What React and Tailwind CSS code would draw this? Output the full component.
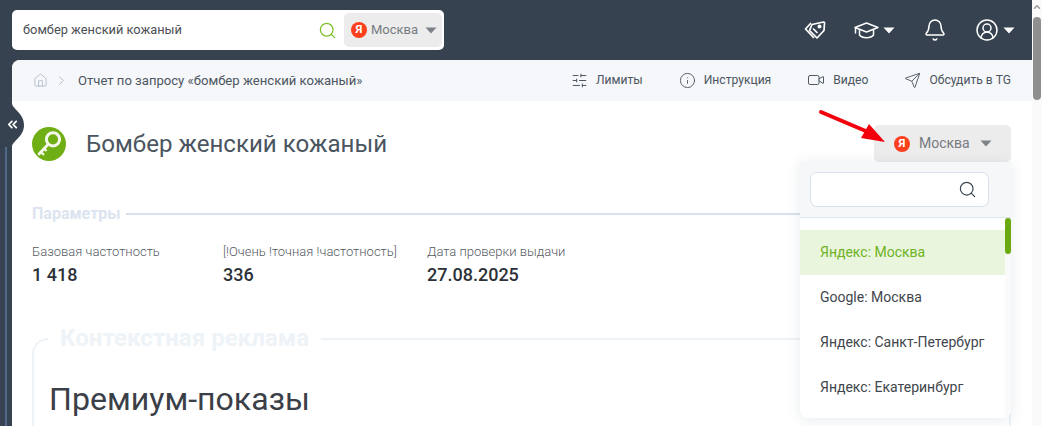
import React from "react";
import { Search, House, ChevronRight, ChevronsLeft, SlidersHorizontal, Info, Video, Send, Bell, CircleUserRound, ChevronUp } from "lucide-react";

const Caret = ({ className }) => (
  <svg width="12" height="7" viewBox="0 0 12 7" className={className}>
    <path d="M0.5 0.5h11L6 6.5z" fill="currentColor" />
  </svg>
);

const Ya = ({ size = 16 }) => (
  <span
    className="flex items-center justify-center rounded-full bg-[#fc3f1d] text-white font-bold shrink-0"
    style={{ width: size, height: size, fontSize: size * 0.72, lineHeight: 1 }}
  >
    Я
  </span>
);

const TagsIcon = () => (
  <svg width="22" height="20" viewBox="0 0 22 20" fill="none" stroke="white" strokeWidth="1.7" strokeLinejoin="round" strokeLinecap="round">
    <path d="M8 4.5 L19.5 2 L20.5 2.5 L20 10.5 L13 18 L5.5 10.5 Z" />
    <path d="M6.5 3.5 L1.5 9 L9.5 17.5" />
    <circle cx="15.5" cy="6.5" r="1.2" fill="white" />
    <path d="M9.5 9 L13 12.5" />
  </svg>
);

const Cap = () => (
  <svg width="25" height="19" viewBox="0 0 25 19" fill="none" stroke="white" strokeWidth="1.5" strokeLinejoin="round" strokeLinecap="round">
    <path d="M12.5 2 L24 6.5 L12.5 11 L1 6.5 Z" />
    <path d="M5.5 9 V14 C8 17.5 17 17.5 19.5 14 V9" />
    <path d="M1.5 7 V12" />
  </svg>
);

const KeyLogo = () => (
  <svg width="34" height="34" viewBox="0 0 34 34" className="shrink-0">
    <circle cx="17" cy="17" r="17" fill="#6fae14" />
    <circle cx="21" cy="12.3" r="6.6" fill="none" stroke="#f4f8ea" strokeWidth="3" />
    <path d="M16 17.5 L7 27" stroke="#f4f8ea" strokeWidth="2.8" strokeLinecap="round" />
    <path d="M9 25 L12 28 M12 21.5 L14.5 24" stroke="#f4f8ea" strokeWidth="2.4" />
  </svg>
);

const Arrow = () => (
  <svg width="72" height="40" viewBox="0 0 72 40" className="absolute left-[818px] top-[109px] pointer-events-none">
    <path d="M3 3 L50 23" stroke="#f2000c" strokeWidth="4" strokeLinecap="round" />
    <path d="M67 33 L43 29 L51 15 Z" fill="#f2000c" />
  </svg>
);

const Tab = () => (
  <svg width="24" height="44" viewBox="0 0 24 44" className="absolute left-0 top-[103px]">
    <path d="M12 0 C12 6 24 10 24 22 C24 34 12 38 12 44 L0 44 L0 0 Z" fill="#36424f" />
  </svg>
);

const Metric = ({ label, value, className }) => (
  <div className={className}>
    <div className="text-[13px] font-light leading-[16px] text-[#555b63]">{label}</div>
    <div className="mt-[5px] text-[18px] font-medium leading-[20px] text-[#2c3138]">{value}</div>
  </div>
);

const ToolLink = ({ icon, label }) => (
  <div className="flex items-center gap-[8px] text-[12.1px] text-[#4c5560]">
    {icon}
    <span>{label}</span>
  </div>
);

const items = ["Google: Москва", "Яндекс: Санкт-Петербург", "Яндекс: Екатеринбург"];

export default function App() {
  return (
    <div className="relative flex h-[426px] w-[1042px] overflow-hidden bg-white" style={{ fontFamily: "Roboto, 'Noto Sans', sans-serif" }}>
      <div className="flex w-[1032px] flex-col bg-[#36424f]">
        <header className="flex h-[60px] shrink-0 items-center pl-[12px] pr-[17px]">
          <div className="flex h-[40px] w-[432px] items-center rounded-[5px] bg-white pl-[11px] pr-[2px]">
            <span className="flex-1 text-[12.8px] text-[#4b4f55]">бомбер женский кожаный</span>
            <Search size={19} strokeWidth={1.6} className="mr-[7px] text-[#7cc02a]" />
            <div className="flex h-[34px] w-[98px] items-center rounded-[5px] bg-[#ececec] pl-[7px]">
              <Ya size={16} />
              <span className="ml-[4px] text-[13px] text-[#767b82]">Москва</span>
              <Caret className="ml-[7px] text-[#7d8288]" />
            </div>
          </div>
          <div className="ml-auto flex items-center">
            <TagsIcon />
            <div className="ml-[28px] flex items-center gap-[4px]">
              <Cap />
              <Caret className="text-white" />
            </div>
            <Bell size={24} strokeWidth={1.5} className="ml-[28px] text-white" />
            <div className="ml-[28px] flex items-center gap-[4px]">
              <CircleUserRound size={24} strokeWidth={1.5} className="text-white" />
              <Caret className="text-white" />
            </div>
          </div>
        </header>
        <div className="flex min-h-0 flex-1">
          <aside className="w-[12px] shrink-0 pl-[5px] pt-[80px]">
            <div className="h-full w-[2px] bg-[#51698a]" />
          </aside>
          <main className="min-w-0 flex-1 overflow-hidden rounded-tl-[8px] bg-white">
            <nav className="flex h-[41px] items-center bg-[#f5f7fa] pl-[21px] pr-[21px]">
              <House size={15} strokeWidth={1.3} className="text-[#aab6c4]" />
              <ChevronRight size={15} strokeWidth={1.4} className="ml-[6px] text-[#aab6c4]" />
              <span className="ml-[9px] text-[13.1px] text-[#4c5560]">Отчет по запросу «бомбер женский кожаный»</span>
              <div className="ml-auto flex items-center gap-[36px]">
                <ToolLink icon={<SlidersHorizontal size={17} strokeWidth={1.4} />} label="Лимиты" />
                <ToolLink icon={<Info size={17} strokeWidth={1.3} />} label="Инструкция" />
                <ToolLink icon={<Video size={18} strokeWidth={1.3} />} label="Видео" />
                <ToolLink icon={<Send size={17} strokeWidth={1.3} />} label="Обсудить в TG" />
              </div>
            </nav>
            <div className="pl-[20px] pr-[21px] pt-[24px]">
              <div className="flex h-[37px] items-center">
                <KeyLogo />
                <h1 className="ml-[20px] text-[24.1px] leading-[30px] text-[#4a5560]">Бомбер женский кожаный</h1>
                <div className="ml-auto flex h-[37px] w-[137px] items-center rounded-[5px] bg-[#ececec] pl-[20px]">
                  <Ya size={16} />
                  <span className="ml-[9px] text-[14px] text-[#767b82]">Москва</span>
                  <Caret className="ml-[10px] text-[#7d8288]" />
                </div>
              </div>
              <div className="mt-[43px] flex items-center gap-[5px]">
                <span className="text-[16px] font-bold leading-[18px] text-[#dbe4ef]">Параметры</span>
                <div className="h-[2px] flex-1 bg-[#d8e2ee]" />
              </div>
              <div className="mt-[21px] flex">
                <Metric className="w-[191px]" label="Базовая частотность" value="1 418" />
                <Metric className="w-[204px]" label="[!Очень !точная !частотность]" value="336" />
                <Metric label="Дата проверки выдачи" value="27.08.2025" />
              </div>
              <div className="relative mt-[53px] h-[120px] rounded-tl-[16px] rounded-tr-[16px] border-2 border-b-0 border-[#eef3f8] pl-[15px] pt-[40px]">
                <div className="absolute left-[14px] top-[-16px] flex items-center bg-white px-[12px]">
                  <span className="text-[24.1px] font-bold leading-[28px] text-[#eef3f8]">Контекстная реклама</span>
                </div>
                <h2 className="text-[32.1px] leading-[38px] text-[#3b4048]">Премиум-показы</h2>
              </div>
            </div>
          </main>
        </div>
      </div>

      <div className="flex w-[10px] flex-col items-center bg-[#fafafa]">
        <ChevronUp size={10} strokeWidth={4} className="mt-[2px] text-[#a0a0a0]" />
        <div className="mt-[5px] h-[83px] w-[8px] rounded-[4px] bg-[#8f8f8f]" />
      </div>

      <Tab />
      <ChevronsLeft size={15} strokeWidth={2.8} className="absolute left-[5px] top-[117px] text-white" />

      <Arrow />

      <div className="absolute left-[800px] top-[162px] flex h-[256px] w-[211px] flex-col overflow-hidden rounded-b-[8px] bg-white shadow-[0_2px_14px_rgba(60,80,110,0.12)]">
        <div className="flex h-[56px] shrink-0 items-center border-b border-[#dfe5ed] bg-[#f6f7f9] pl-[10px]">
          <div className="flex h-[35px] w-[179px] items-center justify-end rounded-[7px] border border-[#d8e0ea] bg-white pr-[11px]">
            <Search size={19} strokeWidth={1.5} className="text-[#3c4650]" />
          </div>
        </div>
        <div className="relative flex-1 pt-[12px]">
          <div className="flex h-[45px] items-center bg-[#e9f5dc] pl-[20px] text-[14px] text-[#6fb325]">Яндекс: Москва</div>
          {items.map((t) => (
            <div key={t} className="flex h-[45px] items-center pl-[20px] text-[14px] text-[#42464c]">{t}</div>
          ))}
          <div className="absolute right-0 top-0 h-full w-[6px] bg-[#fafafa]">
            <div className="h-[36px] w-[6px] rounded-[3px] bg-[#6aa90f]" />
          </div>
        </div>
      </div>
    </div>
  );
}
